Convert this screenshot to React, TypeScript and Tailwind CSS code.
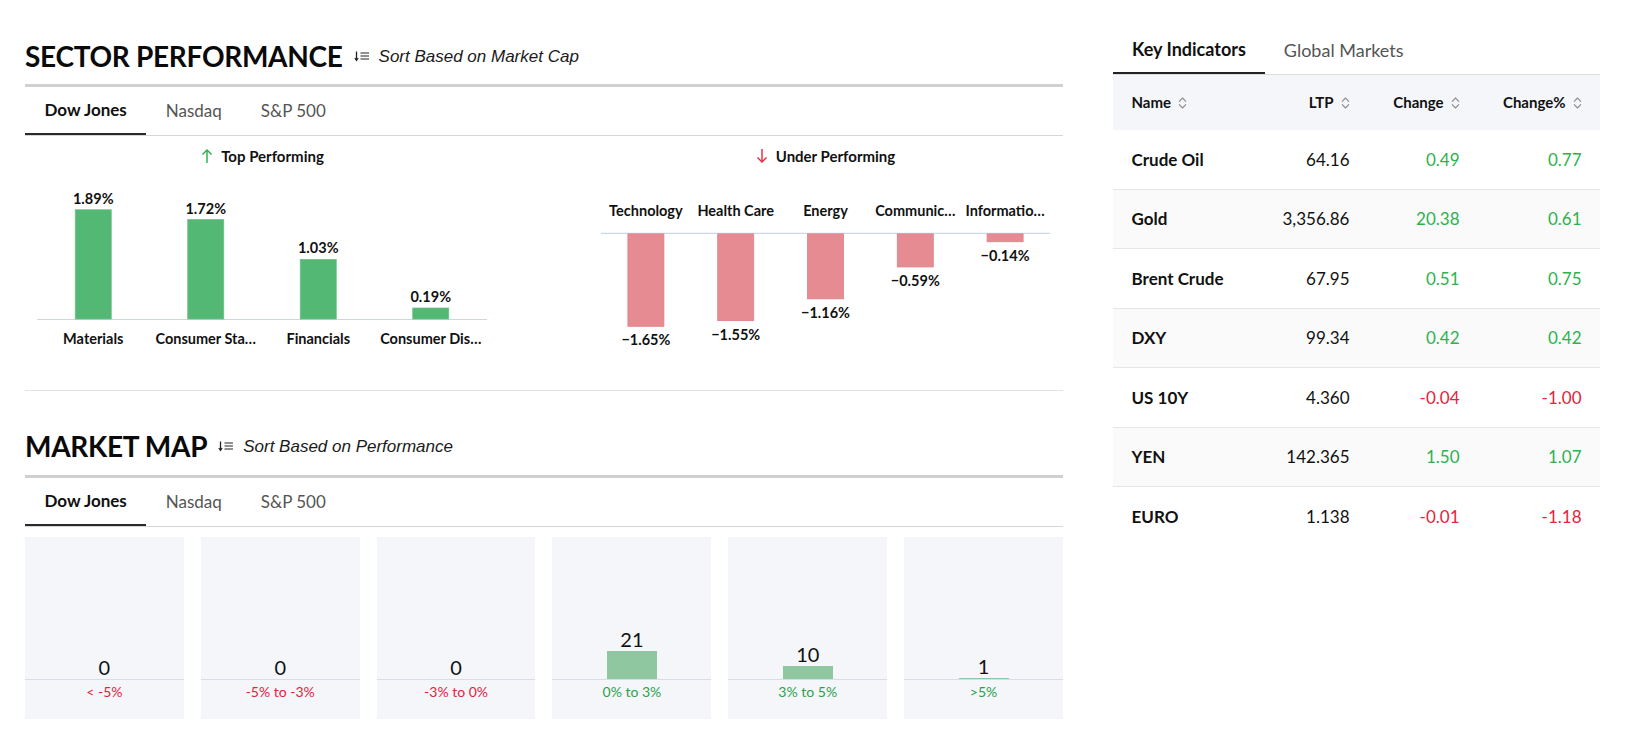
import React from "react";

const LATO = { fontFamily: "Lato, 'Noto Sans', sans-serif" };

function SortListIcon() {
  return (
    <svg width="16" height="12" viewBox="0 0 16 12" className="shrink-0">
      <path d="M2.5 1.5 V10" stroke="#222" strokeWidth="1.3" fill="none" />
      <path d="M0.8 8 L2.5 10.4 L4.2 8" stroke="#222" strokeWidth="1.2" fill="none" />
      <path d="M6.5 3 H15 M6.5 6 H15 M6.5 9 H15" stroke="#222" strokeWidth="1.2" fill="none" />
    </svg>
  );
}

function SortDiamond() {
  return (
    <svg width="9" height="12" viewBox="0 0 9 12" className="shrink-0 ml-[7px]">
      <path d="M1 4.6 L4.5 1 L8 4.6" stroke="#8a8a8a" strokeWidth="1.1" fill="none" />
      <path d="M1 7.4 L4.5 11 L8 7.4" stroke="#8a8a8a" strokeWidth="1.1" fill="none" />
    </svg>
  );
}

function Arrow({ up }: { up: boolean }) {
  const c = up ? "#2aa84a" : "#e3283f";
  return (
    <svg width="12" height="16" viewBox="0 0 12 16" className="shrink-0">
      {up ? (
        <>
          <path d="M6 2 V15" stroke={c} strokeWidth="1.4" fill="none" />
          <path d="M1.5 6.5 L6 2 L10.5 6.5" stroke={c} strokeWidth="1.4" fill="none" />
        </>
      ) : (
        <>
          <path d="M6 1 V14" stroke={c} strokeWidth="1.4" fill="none" />
          <path d="M1.5 9.5 L6 14 L10.5 9.5" stroke={c} strokeWidth="1.4" fill="none" />
        </>
      )}
    </svg>
  );
}

function SectionTitle({ title, sub }: { title: string; sub: string }) {
  return (
    <div className="flex items-center h-[40px]">
      <div className="text-[28px] leading-none font-bold tracking-[-0.3px] text-[#0a0a0a]" style={LATO}>
        {title}
      </div>
      <div className="ml-[11px]">
        <SortListIcon />
      </div>
      <div
        className="ml-[9px] text-[17px] italic text-[#1a1a1a] leading-none"
        style={{ fontFamily: "'Liberation Sans', Arial, sans-serif" }}
      >
        {sub}
      </div>
    </div>
  );
}

function IndexTabs() {
  const tabs = ["Dow Jones", "Nasdaq", "S&P 500"];
  return (
    <div className="flex border-b border-[#d6d6d6]" style={LATO}>
      {tabs.map((t, i) => (
        <div
          key={t}
          className={
            i === 0
              ? "h-[48px] flex items-center px-[19.5px] text-[17px] font-bold text-[#111] border-b-2 border-[#2a2a2a] -mb-px"
              : "h-[48px] flex items-center px-[19.5px] text-[17px] text-[#555]"
          }
        >
          {t}
        </div>
      ))}
    </div>
  );
}

const topPerf = [
  { name: "Materials", v: 1.89 },
  { name: "Consumer Sta…", v: 1.72 },
  { name: "Financials", v: 1.03 },
  { name: "Consumer Dis…", v: 0.19 },
];
const underPerf = [
  { name: "Technology", v: -1.65 },
  { name: "Health Care", v: -1.55 },
  { name: "Energy", v: -1.16 },
  { name: "Communic…", v: -0.59 },
  { name: "Informatio…", v: -0.14 },
];

function TopChart() {
  const base = 151;
  const x0 = 12;
  const cw = 112.5;
  return (
    <svg width="475" height="190" viewBox="0 0 475 190" style={LATO}>
      <line x1={x0} x2={462} y1={base + 0.5} y2={base + 0.5} stroke="#ccd6eb" strokeWidth="1" />
      {topPerf.map((d, i) => {
        const cx = x0 + cw * (i + 0.5);
        const h = d.v * 57.8;
        return (
          <g key={d.name}>
            <rect x={cx - 18} y={base - h} width={36} height={h} fill="#52b873" stroke="#6cc287" strokeWidth="0.8" />
            <text x={cx} y={base - h - 11.5} textAnchor="middle" dominantBaseline="central" fontSize="14.5" fontWeight="700" fill="#111">
              {d.v.toFixed(2)}%
            </text>
            <text x={cx} y={170} textAnchor="middle" dominantBaseline="central" fontSize="14.5" fontWeight="700" fill="#111">
              {d.name}
            </text>
          </g>
        );
      })}
    </svg>
  );
}

function UnderChart() {
  const base = 65.3;
  const x0 = 13;
  const cw = 89.8;
  return (
    <svg width="475" height="190" viewBox="0 0 475 190" style={LATO}>
      <line x1={x0} x2={462} y1={base} y2={base} stroke="#ccd6eb" strokeWidth="1.2" />
      {underPerf.map((d, i) => {
        const cx = x0 + cw * (i + 0.5);
        const h = Math.abs(d.v) * 56;
        return (
          <g key={d.name}>
            <rect x={cx - 18} y={base + 0.6} width={36} height={h} fill="#e68b92" stroke="#df7f87" strokeWidth="0.8" />
            <text x={cx} y={base + h + 14} textAnchor="middle" dominantBaseline="central" fontSize="14.5" fontWeight="700" fill="#111">
              {"\u2212" + Math.abs(d.v).toFixed(2)}%
            </text>
            <text x={cx} y={42.7} textAnchor="middle" dominantBaseline="central" fontSize="14.5" fontWeight="700" fill="#111">
              {d.name}
            </text>
          </g>
        );
      })}
    </svg>
  );
}

const buckets = [
  { n: 0, label: "< -5%", pos: false },
  { n: 0, label: "-5% to -3%", pos: false },
  { n: 0, label: "-3% to 0%", pos: false },
  { n: 21, label: "0% to 3%", pos: true },
  { n: 10, label: "3% to 5%", pos: true },
  { n: 1, label: ">5%", pos: true },
];

const indicators = [
  { name: "Crude Oil", ltp: "64.16", ch: "0.49", pct: "0.77", pos: true },
  { name: "Gold", ltp: "3,356.86", ch: "20.38", pct: "0.61", pos: true },
  { name: "Brent Crude", ltp: "67.95", ch: "0.51", pct: "0.75", pos: true },
  { name: "DXY", ltp: "99.34", ch: "0.42", pct: "0.42", pos: true },
  { name: "US 10Y", ltp: "4.360", ch: "-0.04", pct: "-1.00", pos: false },
  { name: "YEN", ltp: "142.365", ch: "1.50", pct: "1.07", pos: true },
  { name: "EURO", ltp: "1.138", ch: "-0.01", pct: "-1.18", pos: false },
];

export default function App() {
  return (
    <div className="w-[1637px] h-[737px] bg-white flex overflow-hidden" style={LATO}>
      {/* Left column */}
      <div className="ml-[25px] w-[1038px] flex flex-col pt-[36px]">
        <SectionTitle title="SECTOR PERFORMANCE" sub="Sort Based on Market Cap" />
        <div className="mt-[8px] h-[3px] bg-[#d0d0d0]" />
        <IndexTabs />

        <div className="flex justify-between pt-[8px]">
          <div className="w-[475px] flex flex-col">
            <div className="h-[24px] flex items-center justify-center gap-[8px]">
              <Arrow up />
              <span className="text-[15px] font-bold text-[#111]">Top Performing</span>
            </div>
            <TopChart />
          </div>
          <div className="w-[475px] flex flex-col">
            <div className="h-[24px] flex items-center justify-center gap-[8px]">
              <Arrow up={false} />
              <span className="text-[15px] font-bold text-[#111]">Under Performing</span>
            </div>
            <UnderChart />
          </div>
        </div>

        <div className="mt-[32px] h-px bg-[#e3e3e3]" />

        <div className="mt-[35px]">
          <SectionTitle title="MARKET MAP" sub="Sort Based on Performance" />
        </div>
        <div className="mt-[9px] h-[3px] bg-[#d0d0d0]" />
        <IndexTabs />

        <div className="mt-[10px] grid grid-cols-6 gap-[17px]">
          {buckets.map((b) => (
            <div key={b.label} className="h-[182px] bg-[#f5f6fa] flex flex-col">
              <div className="h-[142px] flex flex-col items-center justify-end">
                <div className="text-[20px] leading-[24px] text-[#111]">{b.n}</div>
                <div className="w-[50px] bg-[#8fc8a0]" style={{ height: `${b.n * 1.333}px` }} />
              </div>
              <div className="h-px bg-[#dcdce6]" />
              <div
                className={
                  b.pos
                    ? "text-center text-[14px] leading-[24px] text-[#2aa24a]"
                    : "text-center text-[14px] leading-[24px] text-[#e2233a]"
                }
              >
                {b.label}
              </div>
            </div>
          ))}
        </div>
      </div>

      {/* Right panel */}
      <div className="ml-[50px] w-[487px] flex flex-col pt-[27px]">
        <div className="flex border-b border-[#dedede]">
          <div className="h-[47px] flex items-center px-[19px] text-[18px] font-bold text-[#111] border-b-2 border-[#222] -mb-px">
            Key Indicators
          </div>
          <div className="h-[47px] flex items-center px-[19px] text-[18px] text-[#555]">Global Markets</div>
        </div>
        <div className="h-[55px] bg-[#f5f6fa] px-[18.5px] grid grid-cols-[110px_108px_110px_1fr] items-center text-[15px] font-bold text-[#111]">
          <div className="flex items-center">
            Name
            <SortDiamond />
          </div>
          <div className="flex items-center justify-end">
            LTP
            <SortDiamond />
          </div>
          <div className="flex items-center justify-end">
            Change
            <SortDiamond />
          </div>
          <div className="flex items-center justify-end">
            Change%
            <SortDiamond />
          </div>
        </div>
        {indicators.map((r, i) => (
          <div
            key={r.name}
            className={
              (i % 2 === 1 ? "bg-[#fafafa] " : "bg-white ") +
              (i < indicators.length - 1 ? "border-b border-[#e6e6e6] " : "") +
              "h-[59.5px] px-[18.5px] grid grid-cols-[110px_108px_110px_1fr] items-center text-[17px]"
            }
          >
            <div className="font-bold text-[#111]">{r.name}</div>
            <div className="text-right text-[#111]">{r.ltp}</div>
            <div className={r.pos ? "text-right text-[#2db24e]" : "text-right text-[#e3243b]"}>{r.ch}</div>
            <div className={r.pos ? "text-right text-[#2db24e]" : "text-right text-[#e3243b]"}>{r.pct}</div>
          </div>
        ))}
      </div>
    </div>
  );
}
